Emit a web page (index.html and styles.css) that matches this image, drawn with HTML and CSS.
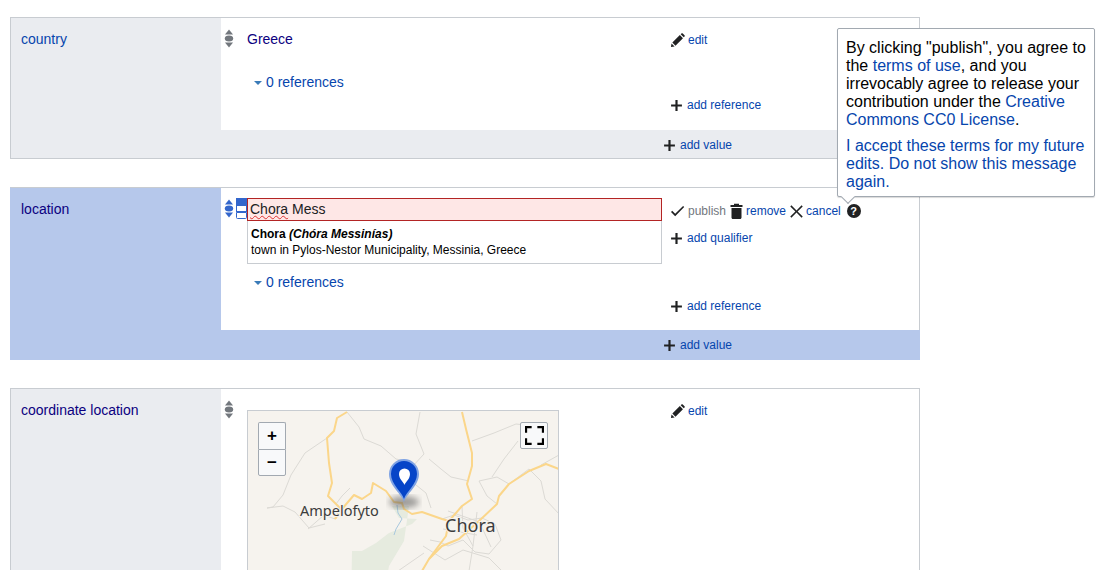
FILE: index.html
```html
<!DOCTYPE html>
<html lang="en">
<head>
<meta charset="utf-8">
<title>Statements</title>
<link rel="stylesheet" href="styles.css">
</head>
<body>
<svg class="defs" width="0" height="0" aria-hidden="true">
  <symbol id="i-plus" viewBox="0 0 12 12"><path d="M5 1h2v4h4v2H7v4H5V7H1V5h4z"/></symbol>
  <symbol id="i-edit" viewBox="0 0 16 16"><path d="M1 15l.6-3.9 3.3 3.3zM2.5 10.2l8-8 3.3 3.3-8 8zM11.4 1.3l.8-.8c.4-.4 1-.4 1.4 0l1.9 1.9c.4.4.4 1 0 1.4l-.8.8z"/></symbol>
  <symbol id="i-check" viewBox="0 0 16 14"><path d="M1 7.5l1.3-1.3 3.2 3.2L14 1l1.2 1.2-9.7 10z"/></symbol>
  <symbol id="i-trash" viewBox="0 0 12 16"><path d="M1 5h10v9.5c0 .8-.6 1.5-1.4 1.5H2.4C1.600 16 1 15.300 1 14.500zM0 2h3.500V.7h5V2H12v2H0z"/></symbol>
  <symbol id="i-x" viewBox="0 0 14 14"><path d="M1.500.300L7 5.800 12.500.300l1.200 1.200L8.200 7l5.500 5.500-1.200 1.200L7 8.200l-5.500 5.500-1.200-1.200L5.800 7 .300 1.500z"/></symbol>
  <symbol id="i-rank" viewBox="0 0 10 21"><path class="tri" d="M1 6.500L5 1.500l4 5z"/><ellipse cx="5" cy="10.500" rx="4.200" ry="3"/><path class="tri" d="M1 14.500l4 5 4-5z"/></symbol>
</svg>

<section class="group">
  <div class="name"><a class="label" href="#">country</a></div>
  <div class="body">
    <div class="statement">
      <div class="rank"><svg class="rank-icon"><use href="#i-rank"/></svg></div>
      <div class="main">
        <a class="value" href="#">Greece</a>
        <a class="refs refs-first" href="#"><span class="caret"></span>0 references</a>
      </div>
      <div class="tools">
        <div class="tool tool-edit"><svg class="ic ic-edit"><use href="#i-edit"/></svg><a href="#">edit</a></div>
        <div class="tool tool-addref"><svg class="ic ic-plus"><use href="#i-plus"/></svg><a href="#">add reference</a></div>
      </div>
    </div>
    <div class="addvalue"><div class="tool"><svg class="ic ic-plus"><use href="#i-plus"/></svg><a href="#">add value</a></div></div>
  </div>
</section>

<section class="group group-active">
  <div class="name"><a class="label label-visited" href="#">location</a></div>
  <div class="body">
    <div class="statement statement-active">
      <div class="rank rank-active">
        <svg class="rank-icon"><use href="#i-rank"/></svg>
        <svg class="snak-icon" viewBox="0 0 11 21"><rect class="fill" x=".5" y=".5" width="10" height="6"/><rect x=".5" y="7.500" width="10" height="6"/><path d="M.5 14.500h10v5a1 1 0 0 1-1 1h-8a1 1 0 0 1-1-1z"/></svg>
      </div>
      <div class="main main-active">
        <div class="input"><span class="misspelt">Chora</span> Mess</div>
        <div class="suggest">
          <div class="suggest-title">Chora <em>(Chóra Messinías)</em></div>
          <div class="suggest-desc">town in Pylos-Nestor Municipality, Messinia, Greece</div>
        </div>
        <a class="refs refs-second" href="#"><span class="caret"></span>0 references</a>
      </div>
      <div class="tools">
        <div class="tool tool-actions">
          <svg class="ic ic-check"><use href="#i-check"/></svg><span class="disabled">publish</span>
          <svg class="ic ic-trash"><use href="#i-trash"/></svg><a href="#">remove</a>
          <svg class="ic ic-x"><use href="#i-x"/></svg><a href="#">cancel</a>
          <span class="help">?</span>
        </div>
        <div class="tool tool-qualifier"><svg class="ic ic-plus"><use href="#i-plus"/></svg><a href="#">add qualifier</a></div>
        <div class="tool tool-addref2"><svg class="ic ic-plus"><use href="#i-plus"/></svg><a href="#">add reference</a></div>
      </div>
    </div>
    <div class="addvalue addvalue-active"><div class="tool"><svg class="ic ic-plus"><use href="#i-plus"/></svg><a href="#">add value</a></div></div>
  </div>
</section>

<section class="group group-last">
  <div class="name"><a class="label label-visited" href="#">coordinate location</a></div>
  <div class="body">
    <div class="statement">
      <div class="rank"><svg class="rank-icon"><use href="#i-rank"/></svg></div>
      <div class="main main-map">
        <div class="map">
          <svg class="map-art" viewBox="0 0 312 200">
            <defs><filter id="blur"><feGaussianBlur stdDeviation="3"/></filter></defs>
            <path class="green" d="M144 95l7 12 18 1-5 5-23 9-13 10-14 8h-10l-1 60h30l8-45 15-25 5-35z"/>
            <g class="minor">
              <path d="M99 1l12 15 5 12 17 7 15 13 10 2M172 1l-4 22 8 20-12 13-4 8"/>
              <path d="M79 27l-22 15-14 22-8 20-10 12-6 1 16-2 12 6 14 16 16-4"/>
              <path d="M88 93l6-8 8-8M60 118l16-14 11 4"/>
              <path d="M181 48l12 10 10 8 18 4M163 70l15 12 5 15M224 30l22-8 22-9 18 2"/>
              <path d="M249 93l-10-8-8-15 18-4 12 7 20-15 12 12 4 18 15 16M270 30l-14 18-12 18M311 44l-18 10"/>
              <path d="M194 108l12-4 14 5 14-2 13 6 6 16-12 14-14-2-12-12-15 6-8-4-10-2"/>
              <path d="M214 95l1 22 10 18 4-34M200 100l40 14M195 118l34 6M231 110l12 26M175 135l22 14 18-10 26 8 14 14M225 135l-4 25M150 160l26-18"/>
            </g>
            <path class="water" d="M149 94l1 8 4 6-6 10-2 6"/>
            <g class="road">
              <path d="M99 1L89 7l-3 13-7 7 2 25 3 20-4 13 8 8 5 5-6 10"/>
              <path d="M87 108l7-10 12-14 8 4 9-6 2-10 13 8 8 11 8 1 2 6 8 5 10-2 20 7 7 2"/>
              <path d="M214 1l4 17 6 24v13l-5 18 5 15-10 7-13 15-3 15-17 23-7 12"/>
              <path d="M311 58l-13-5-17 7-20 13-10 12-2 8-18 17-20 18-17 7-13 13"/>
            </g>
            <ellipse class="shadow" cx="156" cy="91" rx="15" ry="6"/>
            <path class="pin-halo" d="M156 91c-2-8-15-16-15-28a15 15 0 0 1 30 0c0 12-13 20-15 28z"/>
            <path class="pin" d="M156 88c-2-7-13-15-13-25a13 13 0 0 1 26 0c0 10-11 18-13 25z"/>
            <path class="pin-drop" d="M156.500 74c-1-3-5.500-6-5.500-11a5.500 5.500 0 0 1 11 0c0 5-4.500 8-5.500 11z"/>
            <text class="place" x="52" y="105">Ampelofyto</text>
            <text class="place place-big" x="197" y="121">Chora</text>
          </svg>
          <div class="zoom">
            <button class="map-btn" type="button">+</button>
            <button class="map-btn" type="button">−</button>
          </div>
          <div class="map-btn fullscreen">
            <svg viewBox="0 0 20 20" width="20" height="20"><path d="M1 7V1h6M13 1h6v6M19 13v6h-6M7 19H1v-6"/></svg>
          </div>
        </div>
      </div>
      <div class="tools">
        <div class="tool tool-edit3"><svg class="ic ic-edit"><use href="#i-edit"/></svg><a href="#">edit</a></div>
      </div>
    </div>
  </div>
</section>

<aside class="tooltip">
  <p>By clicking "publish", you agree to the <a href="#">terms of use</a>, and you irrevocably agree to release your contribution under the <a href="#">Creative Commons CC0 License</a>.</p>
  <p class="accept"><a href="#">I accept these terms for my future edits. Do not show this message again.</a></p>
  <span class="arrow"></span>
</aside>
</body>
</html>
```
FILE: styles.css
```css
* { box-sizing: border-box; }
html, body { height: 570px; overflow: hidden; }
body {
  margin: 0;
  padding: 17px 0 0 10px;
  font-family: "Liberation Sans", Arial, sans-serif;
  font-size: 14px;
  color: #202122;
  background: #fff;
  position: relative;
}
a { color: #0645ad; text-decoration: none; }
.defs { position: absolute; }

.group {
  display: flex;
  width: 910px;
  margin-bottom: 28px;
  border: 1px solid #c8ccd1;
  background: #eaecf0;
}
.group-active {
  background: #b6c8eb;
  border-color: #b6c8eb;
  border-top-color: #c8ccd1;
  margin-bottom: 28px;
}
.group-last { height: 300px; }
.name { width: 210px; flex: none; padding: 13px 10px; line-height: 17px; }
.label { color: #0645ad; }
.label-visited { color: #0b0080; }
.body { flex: 1; display: flex; flex-direction: column; min-width: 0; }
.statement { display: flex; background: #fff; height: 112px; }
.statement-active { height: 142px; margin-right: -1px; border-right: 1px solid #c8ccd1; }
.group-last .statement { height: auto; flex: 1; }

.rank { width: 26px; flex: none; padding: 10px 0 0 3px; display: flex; align-items: flex-start; gap: 2px; }
.rank-active { padding-top: 10px; }
.rank-icon { width: 10px; height: 21px; fill: #72777d; stroke: none; }
.rank-icon use { color: #72777d; }
.group-active .rank-icon { fill: #3366cc; }
.snak-icon { width: 11px; height: 21px; fill: none; stroke: #3366cc; stroke-width: 1; }
.snak-icon .fill { fill: #3366cc; }

.main { width: 415px; flex: none; }
.value { display: block; padding-top: 13px; line-height: 17px; color: #0b0080; }
.refs { display: block; padding-left: 7px; line-height: 17px; color: #0645ad; }
.refs-first { margin-top: 26px; }
.refs-second { margin-top: 10px; }
.caret {
  display: inline-block;
  width: 0; height: 0;
  margin-right: 4px;
  vertical-align: 2px;
  border: 4px solid transparent;
  border-bottom-width: 0;
  border-top: 4px solid #3a7bb8;
}

.main-active { padding-top: 10px; }
.input {
  height: 23px;
  padding: 0 2px;
  line-height: 20px;
  background: #fee7e6;
  border: 1px solid #b32424;
  color: #202122;
}
.misspelt { text-decoration: underline wavy #d33; text-decoration-thickness: 1px; }
.suggest { height: 43px; padding: 5px 3px; border: 1px solid #c8ccd1; border-top: 0; font-size: 12px; line-height: 16px; color: #000; }
.suggest-title { font-weight: bold; }

.main-map { padding-top: 21px; }
.map { position: relative; width: 312px; height: 260px; border: 1px solid #c8ccd1; background: #f6f3ee; overflow: hidden; margin-bottom: -100px; }
.map-art { display: block; position: absolute; left: 0; top: 0; width: 312px; height: 200px; }
.green { fill: #e6ebdf; }
.minor path { fill: none; stroke: #dcdad5; stroke-width: 1; }
.water { fill: none; stroke: #a8c8de; stroke-width: 1; }
.road path { fill: none; stroke: #fbd68a; stroke-width: 2; stroke-linejoin: round; }
.shadow { fill: #555; opacity: .55; filter: url(#blur); }
.pin-halo { fill: #7fa3e4; }
.pin { fill: #0645c8; }
.pin-drop { fill: #fff; }
.place { font-family: "Noto Sans", sans-serif; font-size: 14.500px; fill: #3c3c3c; paint-order: stroke; stroke: #f6f3ee; stroke-width: 2px; }
.place-big { font-size: 18px; }
.zoom { position: absolute; left: 10px; top: 11px; width: 28px; display: flex; flex-direction: column; }
.map-btn {
  width: 28px; height: 27px; padding: 0;
  background: #f8f9fa;
  border: 1px solid #a2a9b1;
  border-radius: 2px;
  font: bold 17px/24px "Liberation Sans", Arial, sans-serif;
  color: #000;
}
.zoom .map-btn:first-child { border-radius: 2px 2px 0 0; border-bottom: 0; }
.zoom .map-btn:last-child { border-radius: 0 0 2px 2px; }
.fullscreen { position: absolute; right: 10px; top: 11px; display: flex; align-items: center; justify-content: center; }
.fullscreen svg { width: 19px; height: 19px; fill: none; stroke: #000; stroke-width: 2.500; }

.tools { flex: 1; font-size: 12px; line-height: 16px; padding-left: 8px; position: relative; }
.tool { display: flex; align-items: center; gap: 4px; color: #202122; }
.tool a { color: #0645ad; }
.ic { fill: #202122; flex: none; }
.ic-plus { width: 13px; height: 13px; }
.ic-edit { width: 15px; height: 15px; }
.ic-check { width: 15px; height: 13px; }
.ic-trash { width: 13px; height: 16px; margin-left: 1px; }
.ic-x { width: 13px; height: 13px; margin-left: 1px; }
.tool-edit { padding-top: 14px; gap: 3px; }
.tool-addref { margin-top: 49px; }
.tool-actions { padding-top: 15px; gap: 3px; }
.tool-qualifier { margin-top: 11px; }
.tool-addref2 { margin-top: 52px; }
.tool-edit3 { padding-top: 14px; gap: 3px; }
.disabled { color: #72777d; }
.help {
  width: 14px; height: 14px; margin-left: 3px;
  border-radius: 50%;
  background: #202122;
  color: #fff;
  font: bold 11px/14px "Liberation Sans", Arial, sans-serif;
  text-align: center;
}

.addvalue { height: 28px; padding: 7px 0 0 442px; font-size: 12px; line-height: 16px; }
.addvalue-active { height: 29px; padding-top: 7px; }

.tooltip {
  position: absolute;
  left: 837px; top: 28px;
  width: 258px; height: 169px;
  padding: 10px 8px;
  background: #fff;
  border: 1px solid #a2a9b1;
  border-radius: 2px;
  box-shadow: 0 1px 1px rgba(0,0,0,.15);
  font-size: 16px;
  line-height: 18px;
  color: #000;
}
.tooltip p { margin: 0; }
.tooltip .accept { margin-top: 8px; }
.arrow {
  position: absolute;
  left: 5px; bottom: -6px;
  width: 10px; height: 10px;
  background: #fff;
  border-right: 1px solid #a2a9b1;
  border-bottom: 1px solid #a2a9b1;
  transform: rotate(45deg);
}
```
